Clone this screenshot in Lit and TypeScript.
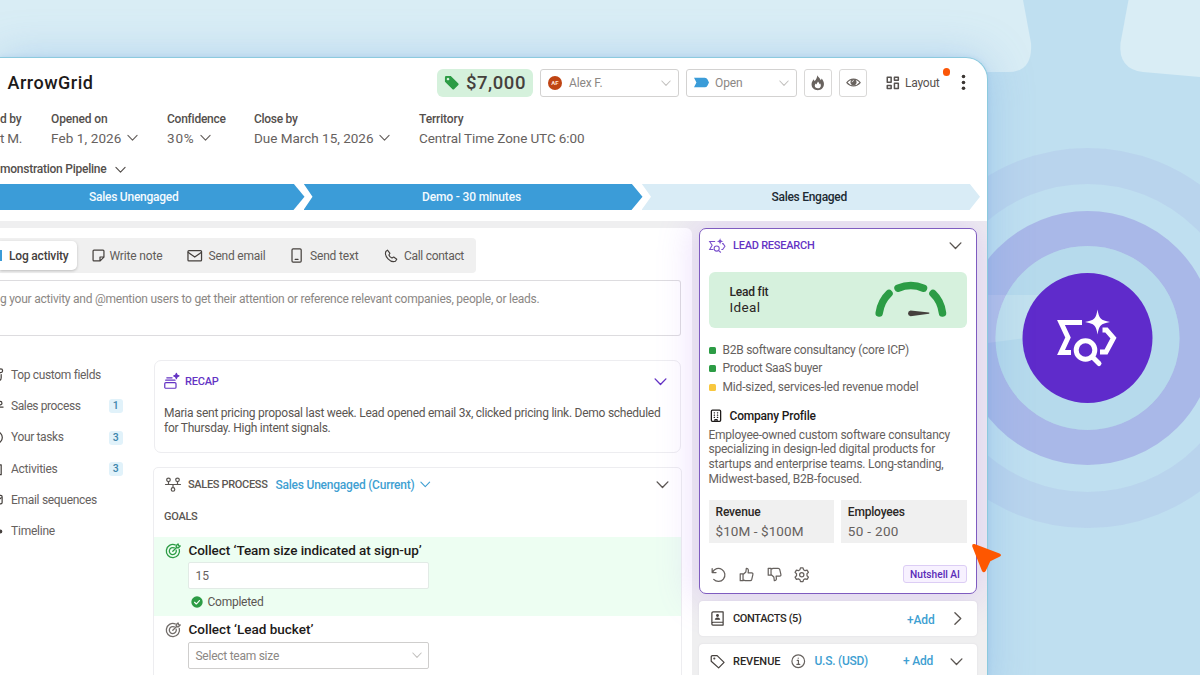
import { LitElement, html, css, svg, nothing } from "lit";
import { customElement } from "lit/decorators.js";

const chevron = (cls: string, w: number, dir = "down") => html`
  <svg class="chev ${cls}" width=${w} height=${w} viewBox="0 0 12 12">
    <path d=${dir === "down" ? "M1 3.6 6 8.8 11 3.6" : "M3.6 .6 9 6 3.6 11.4"} />
  </svg>`;

const icon = (cls: string, body: unknown, w = 16, h = 16) => html`
  <svg class="ico ${cls}" width=${w} height=${h} viewBox="0 0 16 16">${body}</svg>`;

/* Text with a set advance width; tracking is derived once the font is measured. */
const t = (cls: string, width: number, text: string) =>
  html`<span class="t ${cls}" data-w=${width}>${text}</span>`;

const target = svg`
  <path d="M10.2 1.9A6.6 6.6 0 1 0 14.3 6.4"/>
  <path d="M9.3 4.9A3.5 3.5 0 1 0 11.2 7.2"/>
  <path d="M7.8 8.3 12 4.1M11.2 2.6v2.2h2.2l1.8-1.8-1.7-.4-.4-1.7z"/>`;

const research = svg`
  <path d="M21.6 2.3H2.4L11 15.2 2.4 30.4H15.6" />
  <path d="M46 9.6h3.4L56 18.7 48 30.5H43.4" />
  <circle cx="27" cy="27" r="9" />
  <path class="round" d="M34 34 40.6 40" />
  <path class="solid" d="M39 -10C40.4 -2 42.6 .2 51 1.6 42.6 3.2 40.4 5.4 39 14 37.4 5.4 35.4 3.2 27 1.6 35.4 .2 37.6 -2 39 -10Z" />`;

const NAV: { label: string; w: number; count?: string; shape: unknown }[] = [
  { label: "Top custom fields", w: 89.5, shape: svg`<circle cx="12.500" cy="3" r="2"/><path d="M13 7v3.500a3 3 0 0 1-3 3H8"/>` },
  { label: "Sales process", w: 69.5, count: "1", shape: svg`<circle cx="12" cy="4.400" r="1.800"/><path d="M2 8.600h13"/>` },
  { label: "Your tasks", w: 52.5, count: "3", shape: svg`<circle cx="8" cy="8" r="6.200"/>` },
  { label: "Activities", w: 46.5, count: "3", shape: svg`<rect x="2" y="3" width="11" height="10.500"/>` },
  { label: "Email sequences", w: 86, shape: svg`<rect x="3" y="2.500" width="11" height="9" rx="1.500"/><path d="M6 6 9 8.500 13 5"/>` },
  { label: "Timeline", w: 44, shape: svg`<path d="M11 2v12"/><circle cx="12" cy="8" r="1.600" fill="currentColor"/>` },
];

const TABS = [
  { label: "Write note", w: 53, cls: "tab-note", shape: svg`<path d="M3.200 2.200H12.800Q13.800 2.200 13.800 3.200V9.800L9.800 13.800H3.200Q2.200 13.800 2.200 12.800V3.200Q2.200 2.200 3.200 2.200ZM13.800 9.600H9.600v4.200"/>`, iw: 15 },
  { label: "Send email", w: 57, cls: "tab-mail", shape: svg`<rect x="1" y="2.600" width="14" height="10.800" rx="1"/><path d="M1.400 4.600 8 9.400l6.600-4.800"/>`, iw: 15.5 },
  { label: "Send text", w: 48.5, cls: "tab-text", shape: svg`<rect x="3.200" y=".9" width="9.800" height="14.200" rx="1.200"/><path d="M6.600 12.200h3"/>`, iw: 15 },
  { label: "Call contact", w: 60, cls: "tab-call", shape: svg`<path d="M2.100 2.800 4 1.300l2.800 3.600-1.200 1.900c.6 1.600 1.900 2.900 3.500 3.600l2-1.200 3.500 2.500-1.500 2.300c-2.600 1-6.100-.3-8.500-2.800C2.200 8.700 1.100 5.400 2.100 2.800Z"/>`, iw: 14 },
];

const SIGNALS = [
  { label: "B2B software consultancy (core ICP)", w: 186.5, tone: "ok" },
  { label: "Product SaaS buyer", w: 99.5, tone: "ok" },
  { label: "Mid-sized, services-led revenue model", w: 196, tone: "warn" },
];

@customElement("app-root")
export class AppRoot extends LitElement {
  static styles = css`
    :host { display: block; width: 1200px; height: 675px; overflow: hidden; position: relative;
      background: #bfdff0; font-family: Roboto, "Liberation Sans", sans-serif; font-size: 12px; color: #5b5652; }
    * { box-sizing: border-box; }
    .backdrop { position: absolute; inset: 0; }
    .t { display: inline-block; white-space: pre; flex: none; line-height: 15px; }
    svg { display: block; flex: none; overflow: visible; }
    .chev path { fill: none; stroke: currentColor; stroke-width: 1.25; stroke-linecap: round; stroke-linejoin: round; }
    .ico { fill: none; stroke: currentColor; stroke-width: 1.3; stroke-linejoin: round; stroke-linecap: round; }
    .m { font-weight: 500; }
    .caps { font-size: 11px; font-weight: 500; }
    .dark { color: #2b2725; }
    .black { color: #1d1a19; }
    .blue { color: #3f9fd2; }
    .purple { color: #6433c4; }
    .faint { color: #c2c0be; }

    .page { padding-top: 57px; position: relative; }
    .window { width: 988px; height: 640px; background: #fff; border: solid #8ccade; border-width: 1px 1px 0 0;
      border-radius: 0 22px 0 0; overflow: hidden; box-shadow: 0 0 44px rgba(105, 160, 224, .36), 0 0 5px rgba(90,150,220,.2);
      display: flex; flex-direction: column; }

    .top { height: 49px; display: flex; align-items: center; padding: 0 21px 0 7.500px; flex: none; }
    .title { font-size: 18px; line-height: 24px; font-weight: 500; color: #1d1a19; margin-right: auto; }
    .price { width: 96px; height: 28px; border-radius: 6px; background: #d5f1dc; display: flex; align-items: center; padding-left: 7px; gap: 7px; color: #45403d; }
    .amount { font-size: 18.500px; line-height: 22px; font-weight: 500; }
    .select { height: 28px; border: 1px solid #d3d2d1; border-radius: 3px; display: flex; align-items: center; margin-left: 7px; background: #fff; color: #8b8784; }
    .select .t, .layout .t { padding-top: 1.500px; }
    .owner { width: 139px; padding: 0 7px; }
    .state { width: 111px; padding: 0 7px; }
    .select .chev { margin-left: auto; }
    .avatar { width: 14px; height: 14px; border-radius: 50%; background: #bf4413; color: #ffe1d0; font-size: 6px; font-weight: 700; line-height: 14px; text-align: center; margin-right: 7px; }
    .state .ico { margin-right: 6px; }
    .square { width: 28px; height: 28px; border: 1px solid #d9d8d7; border-radius: 3px; margin-left: 7px; display: flex; align-items: center; justify-content: center; color: #69635f; }
    .layout { display: flex; align-items: center; gap: 5.500px; margin-left: 19px; position: relative; color: #57524f; }
    .dot { position: absolute; width: 7.500px; height: 7.500px; border-radius: 50%; background: #fb5607; right: -10.500px; top: -6px; }
    .kebab { margin-left: 21.500px; }

    .facts { display: grid; grid-template-columns: 51px 116px 87px 165px auto; height: 52px; flex: none; padding-top: 3.600px; }
    .fact { display: flex; flex-direction: column; align-items: flex-start; gap: 3px; }
    .fact .m { line-height: 16px; color: #544f4c; }
    .val { display: flex; align-items: center; gap: 5px; font-size: 13.500px; color: #66615e; }
    .val .t { line-height: 16px; }
    .pipe { height: 24px; display: flex; align-items: center; gap: 8.500px; color: #544f4c; margin-top: -2px; flex: none; }

    .steps { display: flex; height: 26.500px; margin: 2.500px 0 10.500px -37px; flex: none; }
    .step { display: flex; align-items: center; justify-content: center; background: #3b9cd8; color: #f3fafe; flex: none; padding-top: 2px; }
    .s1 { width: 341.500px; clip-path: polygon(0 0, 330.5px 0, 100% 50%, 330.5px 100%, 0 100%); }
    .s2 { width: 339px; margin-left: -1px; padding-right: 3px; clip-path: polygon(0 0, 328px 0, 100% 50%, 328px 100%, 0 100%, 9px 50%); }
    .s3 { width: 338.500px; margin-left: -1px; padding-right: 3px; background: #d9ecf6; color: #1d2a33; clip-path: polygon(0 0, 328px 0, 100% 50%, 328px 100%, 0 100%, 9.5px 50%); }

    .body { flex: 1; display: flex; background: #efeff0; overflow: hidden; padding-top: 7px; position: relative; gap: 7px; }
    .main { width: 691.500px; background: #fff; border-radius: 0 6px 0 0; padding-top: 10px; flex: none; }
    .tabs { width: 476px; height: 35px; background: #f0f0f0; border-radius: 0 4px 4px 0; display: flex; align-items: center; color: #615c59; }
    .tabs .t { padding-top: 3px; }
    .tab-on { height: 29px; width: 77px; background: #fff; border-radius: 0 5px 5px 0; box-shadow: 0 1px 3px rgba(0,0,0,.22); display: flex; align-items: center; color: #45403d; }
    .chip { width: 2px; height: 11px; background: #3b9cd8; margin-right: 7px; }
    .tab { display: flex; align-items: center; }
    .tab .ico { color: #45403d; margin-top: 1px; }
    .tab-note { margin-left: 13.500px; gap: 4px; }
    .tab-mail { margin-left: 24.500px; gap: 6px; }
    .tab-text { margin-left: 23.500px; gap: 6px; }
    .tab-call { margin-left: 25.500px; gap: 6px; }
    .compose { width: 681px; height: 56px; margin-top: 7px; border: 1px solid #dddcdf; border-left: 0; border-radius: 0 3px 3px 0; padding-top: 11px; color: #8b8784; }

    .cols { display: flex; margin-top: 24.500px; }
    .nav { width: 153.500px; display: flex; flex-direction: column; flex: none; padding-top: 1px; }
    .item { height: 31.350px; display: flex; align-items: center; color: #66615e; margin-left: -11px; }
    .item .ico { margin-right: 7px; color: #45403d; }
    .item:first-child { height: 28px; margin-bottom: 1.800px; }
    .count { margin-left: auto; margin-right: 31px; width: 13.500px; height: 14px; border-radius: 3px; background: #e1f2fa; color: #3d85ab; font-size: 10.500px; line-height: 14px; text-align: center; font-weight: 500; }
    .feed { width: 528.500px; display: flex; flex-direction: column; gap: 13.500px; }
    .recap { height: 93px; width: 527.500px; border: 1.500px solid #ededf0; border-radius: 7px; padding: 12.500px 13px 0 9.500px; }
    .row { display: flex; align-items: center; }
    .recap .row { height: 16px; }
    .recap .chev { margin-left: auto; }
    .recap-name { margin-left: 6px; }
    .copy { margin-top: 16.500px; display: flex; flex-direction: column; align-items: flex-start; color: #5b5652; }
    .process { height: 260px; margin-left: -.5px; border: 1.500px solid #ededf0; border-radius: 5px; }
    .process .head { height: 16px; margin: 9px 12px 0 11px; }
    .process .head .end { margin-left: auto; }
    .proc-name { margin: 0 8px 0 7px; }
    .stage { margin-right: 5px; padding-top: 1px; }
    .goals { margin: 16px 0 0 10px; height: 15px; display: block; }
    .goal { padding: 5px 0 0 11px; height: 79px; }
    .goal-1 { background: #edfef2; margin-top: 13px; }
    .goal .row { gap: 7.500px; height: 18px; }
    .goal-title { font-size: 13.500px; font-weight: 500; color: #1d1a19; line-height: 17px; }
    .field { width: 241px; height: 27px; margin: 2px 0 0 23px; border-radius: 2px; border: 1px solid #e2ebe6; background: #fff; padding: 0 6.500px; display: flex; align-items: center; color: #66615e; }
    .field .t { padding-top: 2px; }
    .pick { border-color: #cfcecd; color: #8b8784; margin-top: 3px; }
    .pick .chev { margin-left: auto; }
    .goal .done { margin: 4px 0 0 25px; gap: 3.500px; }
    .done .t { padding-top: 1.500px; }
    .g1i { color: #2c9c45; } .g2i { color: #716c69; }

    .side { width: 278.500px; display: flex; flex-direction: column; gap: 7.500px; flex: none; position: relative; }
    .lead { height: 366px; border: 1.500px solid #7f5cc0; border-radius: 7px; background: #fff; padding: 0 9px; flex: none;
      box-shadow: 0 0 36px 6px rgba(170, 105, 245, .22); }
    .lead .head { height: 16px; margin: 8.500px 5px 0 .5px; }
    .lead .head .chev { margin-left: auto; }
    .spark { stroke-width: 3.800; margin: 1px 7.500px 0 0; }
    .spark-fill { fill: none; stroke: currentColor; }
    .spark-fill .solid { fill: currentColor; stroke: none; }
    .spark-fill .round { stroke-linecap: round; }
    .fit { height: 55.500px; width: 258px; margin-top: 19px; border-radius: 6px; background: #d6f1dd; display: flex; padding-left: 21px; }
    .fit-copy { display: flex; flex-direction: column; align-items: flex-start; padding-top: 12.500px; gap: .5px; width: 145px; }
    .ideal { font-size: 13.500px; color: #2b2725; }
    .signals { margin-top: 13.500px; display: flex; flex-direction: column; }
    .signal { display: flex; align-items: center; height: 18.500px; gap: 7px; color: #66615e; }
    .signal i { width: 7px; height: 7px; border-radius: 1.500px; background: #2c9c45; }
    .signal i.warn { background: #f8c73e; }
    .company { margin-top: 11.500px; height: 16px; gap: 7.500px; }
    .about { display: flex; flex-direction: column; align-items: flex-start; margin-top: 3.500px; color: #66615e; }
    .about .t { line-height: 14.700px; }
    .stats { display: flex; gap: 6.500px; margin-top: 14px; }
    .stat { width: 125.800px; height: 42.500px; background: #f0f0f0; padding: 4.500px 7px; display: flex; flex-direction: column; align-items: flex-start; gap: 4px; color: #66615e; }
    .stat .big { font-size: 13.500px; }
    .tools { margin-top: 22.500px; height: 18px; color: #66615e; gap: 12.500px; padding-left: 2.500px; }
    .ai { margin-left: auto; width: 64px; height: 18px; border: 1px solid #dccdf5; background: #f7f1ff; border-radius: 3px; font-size: 10.200px; display: flex; justify-content: center; color: #5a2bb8; font-weight: 500; }
    .ai .t { line-height: 17px; }
    .mini { height: 35px; background: #fff; border-radius: 4px; flex: none; padding: 0 13px 0 11.500px; box-shadow: 0 0 2px rgba(60,40,90,.1); }
    .mini .ico { margin-right: 8px; color: #45403d; }
    .mini .blue.add { margin-left: auto; }
    .mini .more { padding-top: 3px; }
    .mini .end { margin-left: 16.500px; }
    .mini .ico.info { margin: 0 9.500px 0 10px; color: #66615e; }
    .rev { padding-right: 14.500px; }
    .cursor { position: absolute; left: 971px; top: 542px; }
  `;

  firstUpdated() {
    this.renderRoot.querySelectorAll<HTMLElement>("[data-w]").forEach((el) => {
      const want = Number(el.dataset.w);
      const n = (el.textContent ?? "").length;
      el.style.letterSpacing = `${(want - el.getBoundingClientRect().width) / n}px`;
    });
  }

  private backdrop() {
    return html`<svg class="backdrop" width="1200" height="675" viewBox="0 0 1200 675">
      <path fill="#d9edf5" d="M0 0H1023L1031 43Q1033 72 1008 72H0Z"/>
      <path fill="#d9edf5" d="M1128.500 0H1200V77L1143 72Q1118 69 1120.500 43Z"/>
      <path fill="#d2eaf4" d="M980 295H1087V330L980 344Z"/>
      <g fill="none" stroke="#877ada">
        <circle cx="1087.5" cy="338" r="172" stroke-width="36" stroke-opacity=".1"/>
        <circle cx="1087.5" cy="338" r="109.500" stroke-width="35" stroke-opacity=".38"/>
      </g>
      <circle cx="1087.5" cy="338" r="92" fill="#a9d3e6" fill-opacity=".38"/>
      <circle cx="1087.5" cy="338" r="65" fill="#5f2bcb"/>
      <g class="spark-fill" color="#fff" stroke-width="5" transform="translate(1056.500 320)">
        <path d="M25.500 2.600H4.500L11.500 17.500 4.500 32.600H14.500"/>
        <path d="M46 10H50L57 18 49.500 32.100H43.500"/>
        <circle cx="29" cy="30" r="9.300"/>
        <path class="round" d="M36 37 42.500 43.500"/>
        <path class="solid" d="M41-10.500C42.500-1.500 44 .2 53.500 2 44 3.800 42.500 5.500 41 14.500 39.500 5.500 38 3.800 28.500 2 38 .2 39.500-1.500 41-10.500Z"/>
      </g>
    </svg>`;
  }

  private header() {
    return html`
      <div class="top">
        ${t("title", 86, "ArrowGrid")}
        <div class="price">
          ${icon("g1i", svg`<path fill="currentColor" stroke="none" fill-rule="evenodd" d="M1 2.300Q1 1 2.300 1H7.200L15.300 9Q16 9.800 15.300 10.600L10.700 15.200Q9.900 15.900 9.100 15.200L1 7.200ZM4.300 2.900a1.400 1.400 0 1 0 .01 0Z"/>`, 15, 15)}
          ${t("amount", 60, "$7,000")}
        </div>
        <div class="select owner"><div class="avatar">AF</div>${t("", 33.5, "Alex F.")}${chevron("faint", 10)}</div>
        <div class="select state">
          ${icon("", svg`<path fill="#3b9cd8" stroke="none" d="M0 3H11.500Q13.500 3 14.300 4.600L16 8 14.300 11.400Q13.500 13 11.500 13H0L2.600 8Z"/>`, 15, 15)}
          ${t("", 27.5, "Open")}${chevron("faint", 10)}
        </div>
        <div class="square">${icon("", svg`<path fill="currentColor" stroke="none" fill-rule="evenodd" d="M7.600.3c.6 2 2.700 2.800 3.500 5 .5-.4.8-1 .8-1.700 1.700 1.800 2.500 3.600 2.500 5.800 0 3.800-2.800 6.300-6.400 6.300S1.600 13.200 1.600 9.600c0-2.300 1.300-3.700 2.300-5.200 0 .9.300 1.500.9 1.900C6.700 4.500 7.300 2.600 7.600.3ZM8.200 6.700C7.900 8 6.900 8.500 6.700 9.800 6.300 9.600 6.100 9.200 6 8.800 5.300 9.600 4.900 10.200 4.900 11.100 4.900 12.700 6.200 13.700 8 13.700S11.200 12.600 11.200 11C11.200 9.900 10.900 9.200 10.300 8.500 10.200 9 9.900 9.300 9.500 9.500 9.500 8.300 9 7.400 8.200 6.700Z"/>`, 15.5, 15.5)}</div>
        <div class="square">${icon("", svg`<path d="M.9 8.200C4.500 3.100 11.500 3.100 15.100 8.200 11.500 12.800 4.500 12.800.9 8.200Z"/><circle cx="8" cy="7.600" r="3.200" fill="currentColor" stroke="none"/><path d="M6.500 7.300Q6.700 6 8 5.900" stroke="#fff" stroke-width=".8"/>`, 15, 15)}</div>
        <div class="layout">
          ${icon("", svg`<g stroke-width="1.800"><rect x="1.500" y="1.500" width="4.600" height="6"/><rect x="10" y="1.500" width="4.600" height="3.400"/><rect x="1.500" y="11.300" width="4.600" height="3.400"/><rect x="10" y="8.700" width="4.600" height="6"/></g>`, 13.5, 13.5)}
          ${t("", 34.5, "Layout")}<span class="dot"></span>
        </div>
        <svg class="kebab" width="5" height="17" viewBox="0 0 5 17" fill="#3b3633"><circle cx="2.500" cy="2.500" r="1.800"/><circle cx="2.500" cy="8.500" r="1.800"/><circle cx="2.500" cy="14.300" r="1.800"/></svg>
      </div>
      <div class="facts">
        <div class="fact">${t("m", 21.5, "d by")}<div class="val">${t("", 22, "t M.")}</div></div>
        <div class="fact">${t("m", 56.5, "Opened on")}<div class="val">${t("", 70.5, "Feb 1, 2026")}${chevron("", 11)}</div></div>
        <div class="fact">${t("m", 58.5, "Confidence")}<div class="val">${t("", 27.5, "30%")}${chevron("", 11)}</div></div>
        <div class="fact">${t("m", 43.5, "Close by")}<div class="val">${t("", 119.5, "Due March 15, 2026")}${chevron("", 11)}</div></div>
        <div class="fact">${t("m", 44.5, "Territory")}<div class="val">${t("", 165.5, "Central Time Zone UTC 6:00")}</div></div>
      </div>
      <div class="pipe">${t("m", 106.5, "monstration Pipeline")}${chevron("", 11)}</div>
      <div class="steps">
        <div class="step s1">${t("m", 89.5, "Sales Unengaged")}</div>
        <div class="step s2">${t("m", 99, "Demo - 30 minutes")}</div>
        <div class="step s3">${t("m", 75.5, "Sales Engaged")}</div>
      </div>`;
  }

  private main() {
    return html`<div class="main">
      <div class="tabs">
        <div class="tab-on"><span class="chip"></span>${t("m", 59.5, "Log activity")}</div>
        ${TABS.map((x) => html`<div class="tab ${x.cls}">${icon("", x.shape, x.iw, x.iw)}${t("", x.w, x.label)}</div>`)}
      </div>
      <div class="compose">${t("", 539.5, "g your activity and @mention users to get their attention or reference relevant companies, people, or leads.")}</div>
      <div class="cols">
        <div class="nav">
          ${NAV.map((n) => html`<div class="item">${icon("", n.shape, 15, 15)}${t("", n.w, n.label)}${n.count ? html`<span class="count">${n.count}</span>` : nothing}</div>`)}
        </div>
        <div class="feed">
          <div class="recap">
            <div class="row purple">
              ${icon("", svg`<rect x=".8" y="9.200" width="12" height="6" rx="1.200"/><path d="M1.800 6.600H11.800M3 4.100H8.600"/><path d="M13.200-.8Q13.500 1.800 16 2.100 13.500 2.400 13.200 5 12.900 2.400 10.400 2.100 12.900 1.800 13.200-.8Z" fill="currentColor"/>`, 15, 15)}
              ${t("caps recap-name", 33.5, "RECAP")}${chevron("", 13)}
            </div>
            <div class="copy">
              ${t("", 496.5, "Maria sent pricing proposal last week. Lead opened email 3x, clicked pricing link. Demo scheduled")}
              ${t("", 166.5, "for Thursday. High intent signals.")}
            </div>
          </div>
          <div class="process">
            <div class="row head">
              ${icon("", svg`<circle cx="3.200" cy="3" r="1.900"/><circle cx="12.800" cy="3" r="1.900"/><circle cx="8" cy="13.200" r="1.900"/><path d="M0 8H16M3.200 5V8M12.800 5V8M8 8v3"/>`, 16, 15)}
              ${t("caps proc-name", 79.5, "SALES PROCESS")}
              ${t("m blue stage", 139, "Sales Unengaged (Current)")}${chevron("blue", 10.5)}
              ${chevron("end", 13)}
            </div>
            <div class="goals">${t("caps", 33.5, "GOALS")}</div>
            <div class="goal goal-1">
              <div class="row">${icon("g1i", target, 16, 16)}${t("goal-title", 233, "Collect ‘Team size indicated at sign-up’")}</div>
              <div class="field">${t("", 13.5, "15")}</div>
              <div class="row done">${icon("", svg`<circle cx="8" cy="8" r="6.500" fill="#2c9c45" stroke="none"/><path stroke="#fff" d="m5.200 8.300 2 2 3.600-4"/>`, 14, 14)}${t("", 56, "Completed")}</div>
            </div>
            <div class="goal">
              <div class="row">${icon("g2i", target, 16, 16)}${t("goal-title", 125, "Collect ‘Lead bucket’")}</div>
              <div class="field pick">${t("", 83.5, "Select team size")}${chevron("faint", 10)}</div>
            </div>
          </div>
        </div>
      </div>
    </div>`;
  }

  private side() {
    const thumb = svg`<path d="M1.300 7.300H4.300V14.600H1.300ZM4.300 8 7.300 5.300 7.800 1.500Q10 1.400 10 3.800L9.700 6.300H13.500Q15.200 6.500 14.800 8.200L13.600 13.300Q13.200 14.600 12 14.600H6.500L4.300 13.700"/>`;
    return html`<div class="side">
      <div class="lead">
        <div class="row head">
          <svg class="spark spark-fill purple" width="16.5" height="15.4" viewBox="0 -10 58 54" opacity=".85">${research}</svg>
          ${t("caps purple", 81.5, "LEAD RESEARCH")}${chevron("", 13)}
        </div>
        <div class="fit">
          <div class="fit-copy">${t("m dark", 38.5, "Lead fit")}${t("ideal", 31, "Ideal")}</div>
          <svg width="72" height="54" viewBox="0 1 72 54" fill="none" stroke="#2c9c45" stroke-width="7.500" stroke-linecap="round">
            <path d="M4.200 42Q6 30 14 22.500M23 17.200Q36 12 48.500 17.200M58 22.500Q66 30 67.500 42"/>
            <path stroke="none" fill="#45403d" d="M35.500 39.600 54 41.600Q55 42.200 54 42.800L35.500 45.200Q33 44.600 33 42.400T35.500 39.600Z"/>
          </svg>
        </div>
        <div class="signals">${SIGNALS.map((s) => html`<div class="signal"><i class=${s.tone}></i>${t("", s.w, s.label)}</div>`)}</div>
        <div class="row company">
          ${icon("black", svg`<rect x="2.800" y="1.300" width="11" height="13.400" rx="1.300" stroke-width="1.500"/><path stroke-width="1.500" d="M6.200 4.500h.3M10 4.500h.3M6.200 7.300h.3M10 7.300h.3M6.200 10h.3M10 10h.3M7 14.500V12.600H9.600V14.500"/>`, 13.5, 13.5)}
          ${t("m black", 86, "Company Profile")}
        </div>
        <div class="about">
          ${t("", 241.5, "Employee-owned custom software consultancy")}
          ${t("", 226.5, "specializing in design-led digital products for")}
          ${t("", 235, "startups and enterprise teams. Long-standing,")}
          ${t("", 153.5, "Midwest-based, B2B-focused.")}
        </div>
        <div class="stats">
          <div class="stat">${t("m dark", 45, "Revenue")}${t("big", 88, "$10M - $100M")}</div>
          <div class="stat">${t("m dark", 57, "Employees")}${t("big", 51, "50 - 200")}</div>
        </div>
        <div class="row tools">
          ${icon("", svg`<path d="M1.200 1.700V5.700H5.200M1.600 5.300A6.700 6.700 0 1 1 2.800 12.800"/>`, 15.5, 15.5)}
          ${icon("", thumb, 15, 15)}
          ${icon("", svg`<g transform="translate(0 16) scale(1 -1)">${thumb}</g>`, 15, 15)}
          ${icon("", svg`<circle cx="8" cy="8" r="2.200"/><path d="M6.700.9H9.300L9.900 2.900 11.400 3.800 13.500 3.200 14.900 5.500 13.400 7V9L14.900 10.500 13.500 12.800 11.400 12.200 9.900 13.100 9.300 15.100H6.700L6.100 13.100 4.600 12.200 2.500 12.800 1.100 10.500 2.600 9V7L1.100 5.500 2.500 3.200 4.600 3.800 6.100 2.900Z"/>`, 15.5, 15.5)}
          <div class="ai">${t("", 50, "Nutshell AI")}</div>
        </div>
      </div>
      <div class="row mini">
        ${icon("", svg`<path d="M2 14V2.500Q2 1 3.500 1H14V15H3Q2 15 2 13.500T3.500 12H14"/><circle cx="8" cy="4.800" r=".9" fill="currentColor"/><path d="M5.800 8.800Q8 6.600 10.200 8.800Z" fill="currentColor"/>`, 15, 15)}
        ${t("caps dark", 68.5, "CONTACTS (5)")}${t("m blue add more", 27.5, "+Add")}${chevron("end", 13, "right")}
      </div>
      <div class="row mini rev">
        ${icon("", svg`<path d="M1.300 3.200Q1.300 1.800 2.700 1.800H7.600L15 9 9.200 14.800 1.300 7.700Z"/><circle cx="4.600" cy="4.800" r=".5"/>`, 15, 15)}
        ${t("caps dark", 47.5, "REVENUE")}
        ${icon("info", svg`<circle cx="8" cy="8" r="7"/><path d="M6.800 7H8.200V11.400M6.500 11.500H9.700M8 4.500v.2"/>`, 14.5, 14.5)}
        ${t("m blue", 53.5, "U.S. (USD)")}${t("m blue add", 30, "+ Add")}${chevron("end", 13)}
      </div>
    </div>`;
  }

  render() {
    return html`${this.backdrop()}
      <div class="page"><div class="window">${this.header()}<div class="body">${this.main()}${this.side()}</div></div></div>
      <svg class="cursor" width="32" height="32" viewBox="0 0 32 32"><path fill="#fe5700" d="M3.500 2 28.500 11.500Q31.500 13.200 28.500 14.800L19.300 19.200 14.700 29Q12.800 31.500 11 29L1.200 4.300Q.8 1.500 3.500 2Z"/></svg>`;
  }
}
